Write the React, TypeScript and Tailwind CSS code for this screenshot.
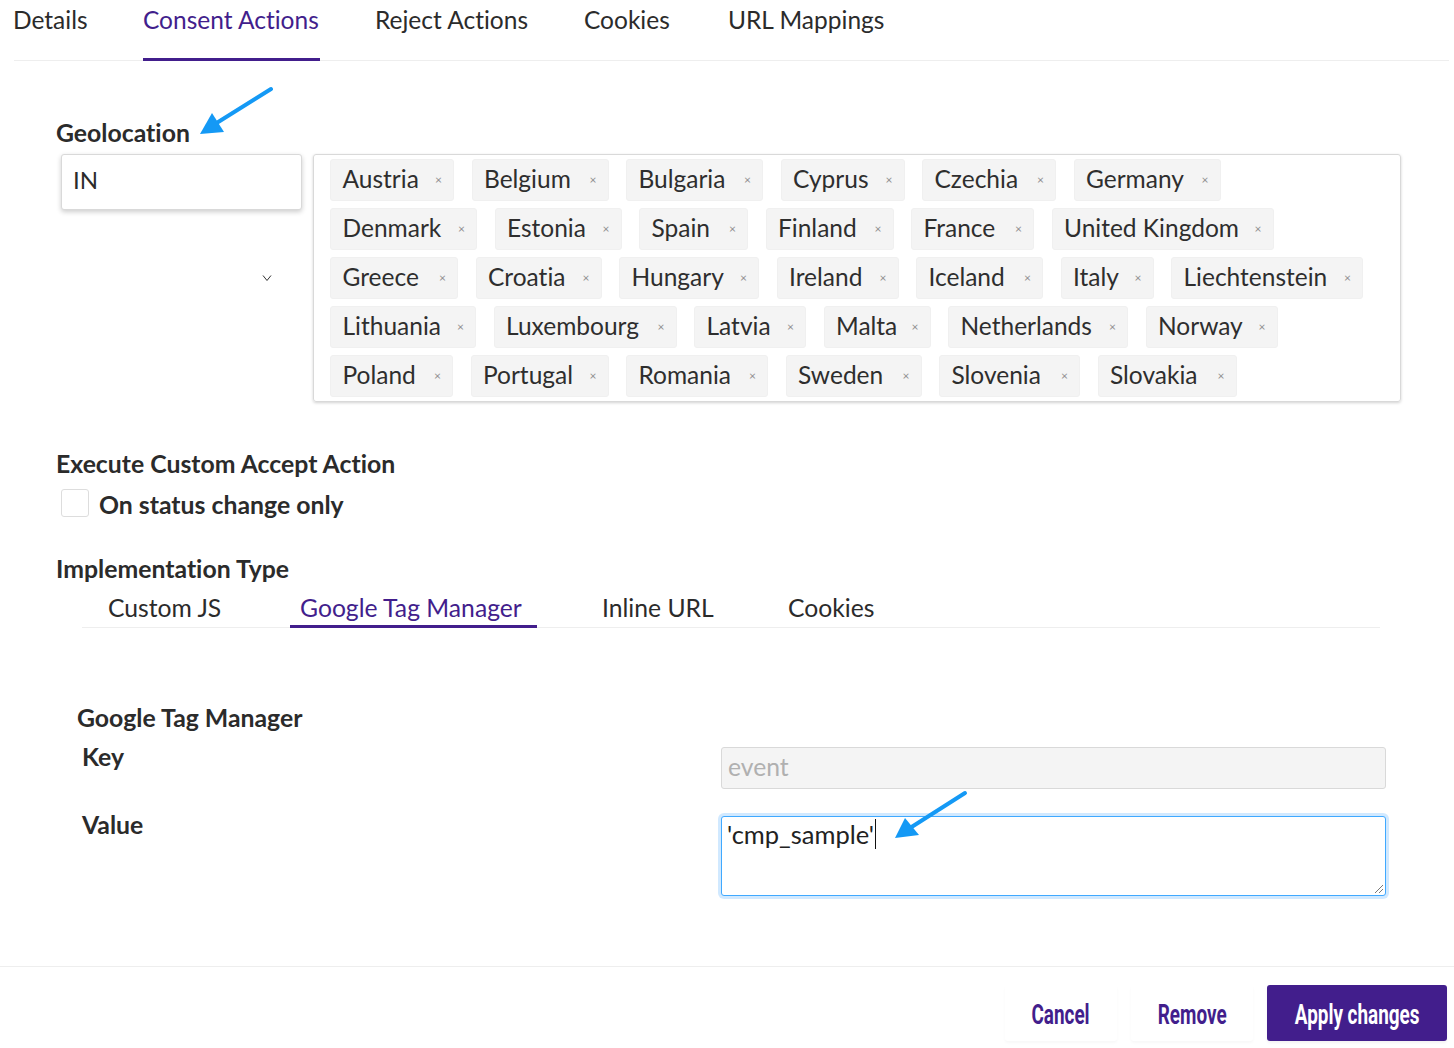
const rows: [string, number][][] = [
  [["Austria", 124], ["Belgium", 137], ["Bulgaria", 137], ["Cyprus", 124], ["Czechia", 134], ["Germany", 147]],
  [["Denmark", 147], ["Estonia", 127], ["Spain", 109], ["Finland", 128], ["France", 123], ["United Kingdom", 222]],
  [["Greece", 128], ["Croatia", 126], ["Hungary", 140], ["Ireland", 122], ["Iceland", 127], ["Italy", 93], ["Liechtenstein", 192]],
  [["Lithuania", 146], ["Luxembourg", 183], ["Latvia", 112], ["Malta", 107], ["Netherlands", 180], ["Norway", 132]],
  [["Poland", 123], ["Portugal", 138], ["Romania", 142], ["Sweden", 136], ["Slovenia", 141], ["Slovakia", 139]],
];

function Arrow({ className, d, head }: { className: string; d: string; head: string }) {
  return (
    <svg className={className} viewBox="0 0 80 60" fill="none">
      <path d={d} stroke="#1499f5" strokeWidth="4" strokeLinecap="round" />
      <polygon points={head} fill="#1499f5" />
    </svg>
  );
}

export default function App() {
  return (
    <div className="relative w-[1454px] h-[1048px] overflow-hidden bg-white text-[#2b2b2b] font-['Lato','Noto_Sans',sans-serif] [font-variant-ligatures:none]">
      <div className="ml-[14px] mr-[5px] flex h-[61px] border-b border-[#eeeeee] text-[24.5px]">
        <div className="w-[129px] pt-[2px] -ml-px pr-px">Details</div>
        <div className="w-[177px] h-[61px] ml-px mr-[55px] pt-[2px] border-b-[3px] border-[#421e8c] text-[#421e8c]">Consent Actions</div>
        <div className="w-[209px] pt-[2px]">Reject Actions</div>
        <div className="w-[144px] pt-[2px]">Cookies</div>
        <div className="pt-[2px]">URL Mappings</div>
      </div>

      <div className="pl-[56px] pt-[57px] text-[24.8px] font-bold leading-[30px]">Geolocation</div>

      <div className="ml-[61px] mt-[6px] flex gap-[11px] items-start">
        <div className="relative w-[241px] h-[248px] shrink-0">
          <div className="h-[56px] rounded-[3px] border border-[#d9d9d9] bg-white pl-[11px] pt-[9px] text-[24px] leading-[32px] shadow-[0_2px_5px_rgba(0,0,0,0.2)]">IN</div>
          <svg className="absolute left-[201px] top-[120px] w-[10px] h-[8px]" viewBox="0 0 10 8" fill="none">
            <path d="M1 1.5 L5 6.5 L9 1.5" stroke="#333" strokeWidth="1" />
          </svg>
        </div>
        <div className="w-[1088px] h-[248px] rounded-[3px] border border-[#d9d9d9] pl-[16px] pt-[4px] flex flex-col gap-[7px] shadow-[0_1px_3px_rgba(0,0,0,0.18)]">
          {rows.map((r, i) => (
            <div key={i} className="flex gap-[17.5px]">
              {r.map(([n, w]) => (
                <div key={n} style={{ width: w }} className="h-[42px] flex items-center justify-between rounded-[3px] border border-[#f0f0f0] bg-[#f4f4f4] pl-[11.5px] pr-[11px] text-[24.5px] text-[#2e2e2e]">
                  <span className="-mt-[2px]">{n}</span>
                  <span className="text-[12px] -mt-[1px] text-[#8f8f8f]">×</span>
                </div>
              ))}
            </div>
          ))}
        </div>
      </div>

      <div className="pl-[56px] mt-[47px] text-[24.8px] font-bold leading-[30px]">Execute Custom Accept Action</div>
      <div className="ml-[61px] mt-[9px] h-[32px] flex items-center gap-[10px]">
        <div className="w-[28px] h-[28px] -translate-y-px rounded-[3px] border border-[#dddddd]" />
        <div className="text-[24.8px] font-bold leading-[30px] translate-y-px">On status change only</div>
      </div>

      <div className="pl-[56px] mt-[34px] text-[24.8px] font-bold leading-[30px]">Implementation Type</div>
      <div className="ml-[82px] mt-[8px] w-[1298px] flex h-[36px] border-b border-[#eeeeee] text-[24.7px] leading-[32px]">
        <div className="w-[208px] pl-[26px]">Custom JS</div>
        <div className="w-[247px] h-[36px] pl-[10px] border-b-[3px] border-[#421e8c] text-[#421e8c]">Google Tag Manager</div>
        <div className="w-[251px] pl-[65px]">Inline URL</div>
        <div>Cookies</div>
      </div>

      <div className="pl-[77px] mt-[75px] text-[24.8px] font-bold leading-[30px]">Google Tag Manager</div>
      <div className="ml-[82px] mt-[14px] flex h-[42px] w-[1304px]">
        <div className="w-[639px] text-[24.8px] font-bold leading-[30px] -mt-[5px]">Key</div>
        <div className="flex-1 rounded-[3px] border border-[#d9d9d9] bg-[#f4f4f4] pl-[6px] text-[24.7px] leading-[38px] text-[#b0b0b0]">event</div>
      </div>
      <div className="ml-[82px] mt-[27px] flex h-[80px] w-[1304px]">
        <div className="w-[639px] text-[24.8px] font-bold leading-[30px] -mt-[6px]">Value</div>
        <div className="relative flex-1 rounded-[3px] border border-[#40a9ff] bg-white pl-[5px] text-[25.5px] leading-[34px] text-[#222] shadow-[0_0_0_3px_rgba(24,144,255,0.2)]">
          <span className="border-r border-[#111] pr-px">'cmp_sample'</span>
          <svg className="absolute right-[1px] bottom-[1px] w-[10px] h-[10px]" viewBox="0 0 10 10" fill="none">
            <path d="M1 9 L9 1 M5 9 L9 5" stroke="#555" strokeWidth="0.8" />
          </svg>
        </div>
      </div>

      <div className="mt-[70px] h-[82px] border-t border-[#eeeeee] flex justify-end items-start pt-[18px] pr-[7px] text-[#421e8c] font-['Roboto',sans-serif] font-bold text-[27px]">
        <div className="w-[112px] h-[56px] pt-[4px] rounded-[3px] flex items-center justify-center shadow-[0_2px_3px_rgba(0,0,0,0.03)]">
          <span className="inline-block scale-x-[0.7]">Cancel</span>
        </div>
        <div className="ml-[14px] w-[122px] h-[56px] pt-[4px] rounded-[3px] flex items-center justify-center shadow-[0_2px_3px_rgba(0,0,0,0.03)]">
          <span className="inline-block scale-x-[0.7]">Remove</span>
        </div>
        <div className="ml-[14px] w-[180px] h-[56px] pt-[4px] rounded-[3px] bg-[#421e8c] text-white flex items-center justify-center whitespace-nowrap shadow-[0_2px_3px_rgba(0,0,0,0.05)]">
          <span className="inline-block scale-x-[0.7]">Apply changes</span>
        </div>
      </div>

      <Arrow className="absolute left-[195px] top-[85px] w-[80px] h-[60px]" d="M76 4 L20 39" head="5,49 17,28 29,47" />
      <Arrow className="absolute left-[890px] top-[790px] w-[80px] h-[60px]" d="M75 3 L20 38" head="5,48 15,28 29,45" />
    </div>
  );
}
